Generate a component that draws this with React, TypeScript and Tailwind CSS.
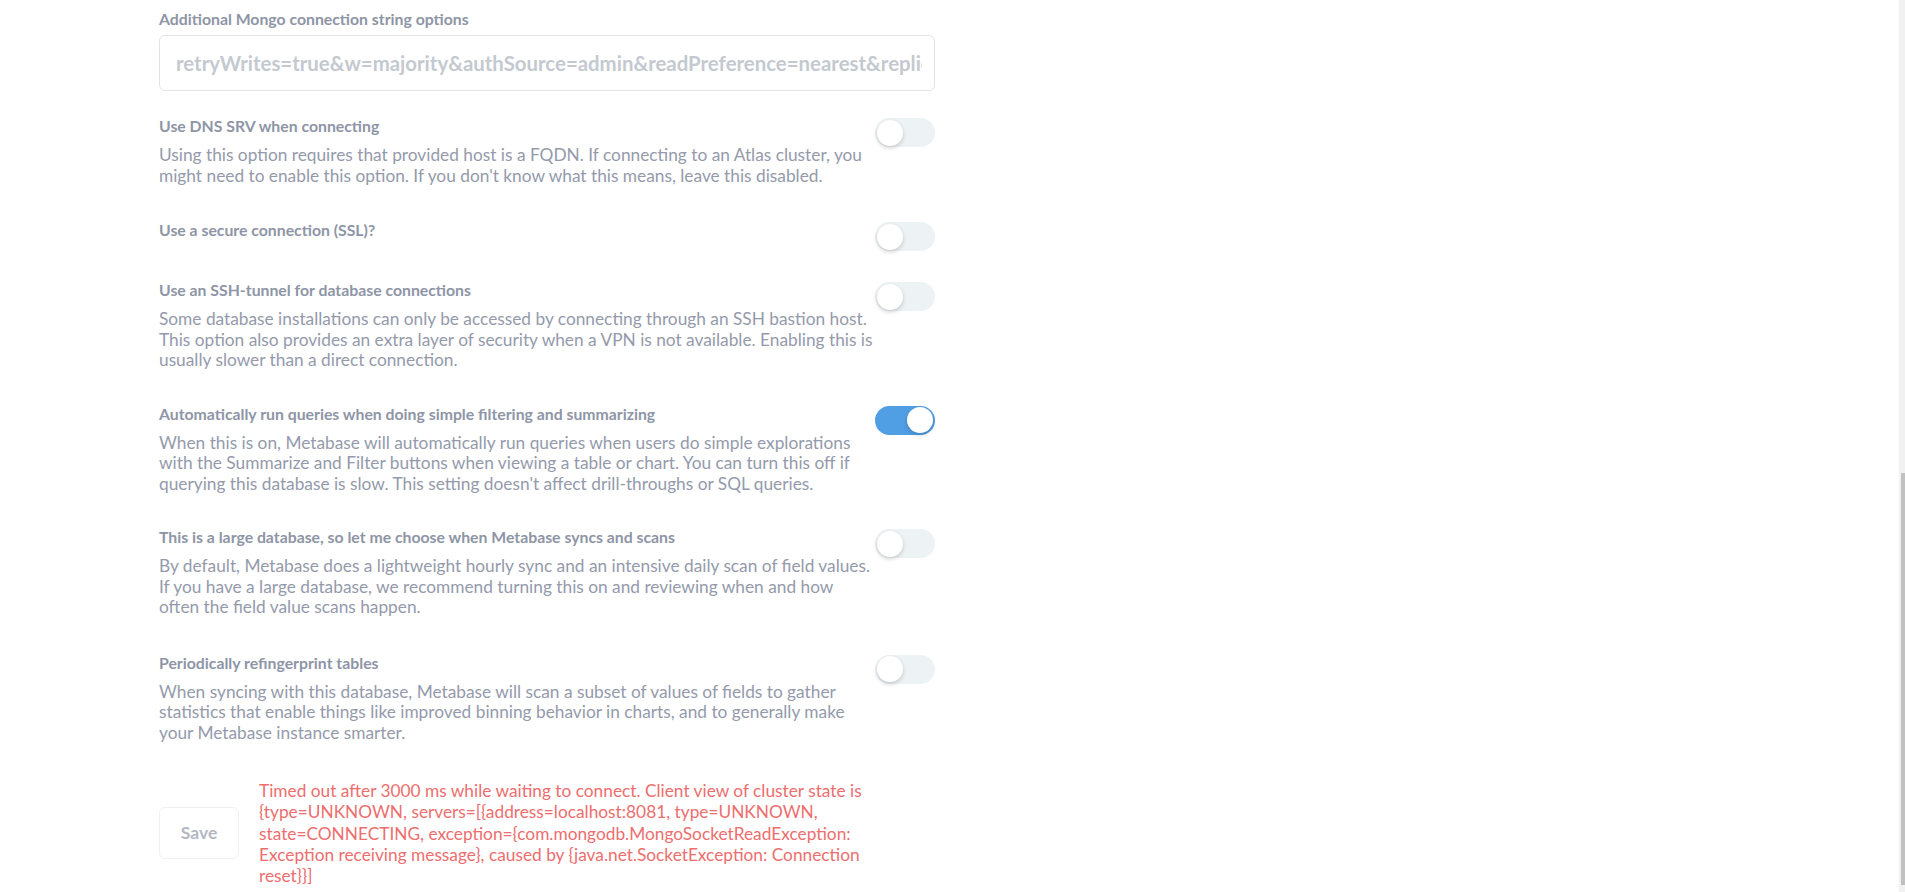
import React from 'react';

interface Setting {
  label: string;
  description?: string;
  on: boolean;
  gap: string;
}

const settings: Setting[] = [
  {
    label: 'Use DNS SRV when connecting',
    description:
      "Using this option requires that provided host is a FQDN. If connecting to an Atlas cluster, you might need to enable this option. If you don't know what this means, leave this disabled.",
    on: false,
    gap: 'mb-[34px]',
  },
  { label: 'Use a secure connection (SSL)?', on: false, gap: 'mb-[29px]' },
  {
    label: 'Use an SSH-tunnel for database connections',
    description:
      'Some database installations can only be accessed by connecting through an SSH bastion host. This option also provides an extra layer of security when a VPN is not available. Enabling this is usually slower than a direct connection.',
    on: false,
    gap: 'mb-[33px]',
  },
  {
    label: 'Automatically run queries when doing simple filtering and summarizing',
    description:
      "When this is on, Metabase will automatically run queries when users do simple explorations with the Summarize and Filter buttons when viewing a table or chart. You can turn this off if querying this database is slow. This setting doesn't affect drill-throughs or SQL queries.",
    on: true,
    gap: 'mb-[33px]',
  },
  {
    label: 'This is a large database, so let me choose when Metabase syncs and scans',
    description:
      'By default, Metabase does a lightweight hourly sync and an intensive daily scan of field values. If you have a large database, we recommend turning this on and reviewing when and how often the field value scans happen.',
    on: false,
    gap: 'mb-[35px]',
  },
  {
    label: 'Periodically refingerprint tables',
    description:
      'When syncing with this database, Metabase will scan a subset of values of fields to gather statistics that enable things like improved binning behavior in charts, and to generally make your Metabase instance smarter.',
    on: false,
    gap: 'mb-0',
  },
];

function Toggle({ on }: { on: boolean }) {
  return (
    <div
      className={`mt-[2px] flex h-[29px] w-[60px] shrink-0 items-center rounded-full px-[2px] ${
        on ? 'justify-end bg-[#509ee3]' : 'justify-start bg-[#edf2f5]'
      }`}
    >
      <div className="h-[26px] w-[26px] rounded-full bg-white shadow-[0_2px_4px_rgba(0,0,0,0.18)]" />
    </div>
  );
}

export default function App() {
  return (
    <div
      className="flex h-[892px] w-full overflow-hidden bg-white"
      style={{ fontFamily: 'Lato, "Open Sans", sans-serif' }}
    >
      <div className="flex-1 pl-[159px] pt-[9px]">
        <div className="w-[776px]">
          {/* Connection string */}
          <div className="text-[15.8px] font-bold leading-[20px] text-[#8e95a6]">
            Additional Mongo connection string options
          </div>
          <input
            readOnly
            placeholder="retryWrites=true&w=majority&authSource=admin&readPreference=nearest&replicaSet=mySet"
            className="mt-[6px] h-[56px] w-full rounded-[6px] border border-[#e0e4e9] bg-white pl-[16px] pr-[12px] text-[20.4px] font-bold text-[#4c5773] outline-none placeholder:text-[#c4c9d0]"
          />

          {/* Toggles */}
          <div className="mt-[25px]">
            {settings.map(s => (
              <div key={s.label} className={`flex items-start justify-between ${s.gap}`}>
                <div className="w-[716px]">
                  <div className="text-[15.8px] font-bold leading-[20px] text-[#8e95a6]">{s.label}</div>
                  {s.description && (
                    <p className="mt-[9px] text-[17.3px] leading-[20.5px] text-[#949aab]">{s.description}</p>
                  )}
                </div>
                <Toggle on={s.on} />
              </div>
            ))}
          </div>

          {/* Save + error */}
          <div className="mt-[37px] flex items-center">
            <button className="h-[52px] w-[80px] shrink-0 rounded-[6px] border border-[#eef0f3] bg-white text-[17.5px] font-bold text-[#b3b8c4]">
              Save
            </button>
            <div className="ml-[20px] w-[612px] text-[17.3px] leading-[21.3px] text-[#ed6e6e]">
              Timed out after 3000 ms while waiting to connect. Client view of cluster state is
              {' {type=UNKNOWN, servers=[{address=localhost:8081, type=UNKNOWN, state=CONNECTING, exception={com.mongodb.MongoSocketReadException: Exception receiving message}, caused by {java.net.SocketException: Connection reset}}]'}
            </div>
          </div>
        </div>
      </div>

      {/* Scrollbar */}
      <div className="w-[6px] shrink-0 bg-[#f1f1f1]">
        <div className="ml-[2px] mt-[473px] h-[412px] w-[4px] bg-[#c1c1c1]" />
      </div>
    </div>
  );
}
